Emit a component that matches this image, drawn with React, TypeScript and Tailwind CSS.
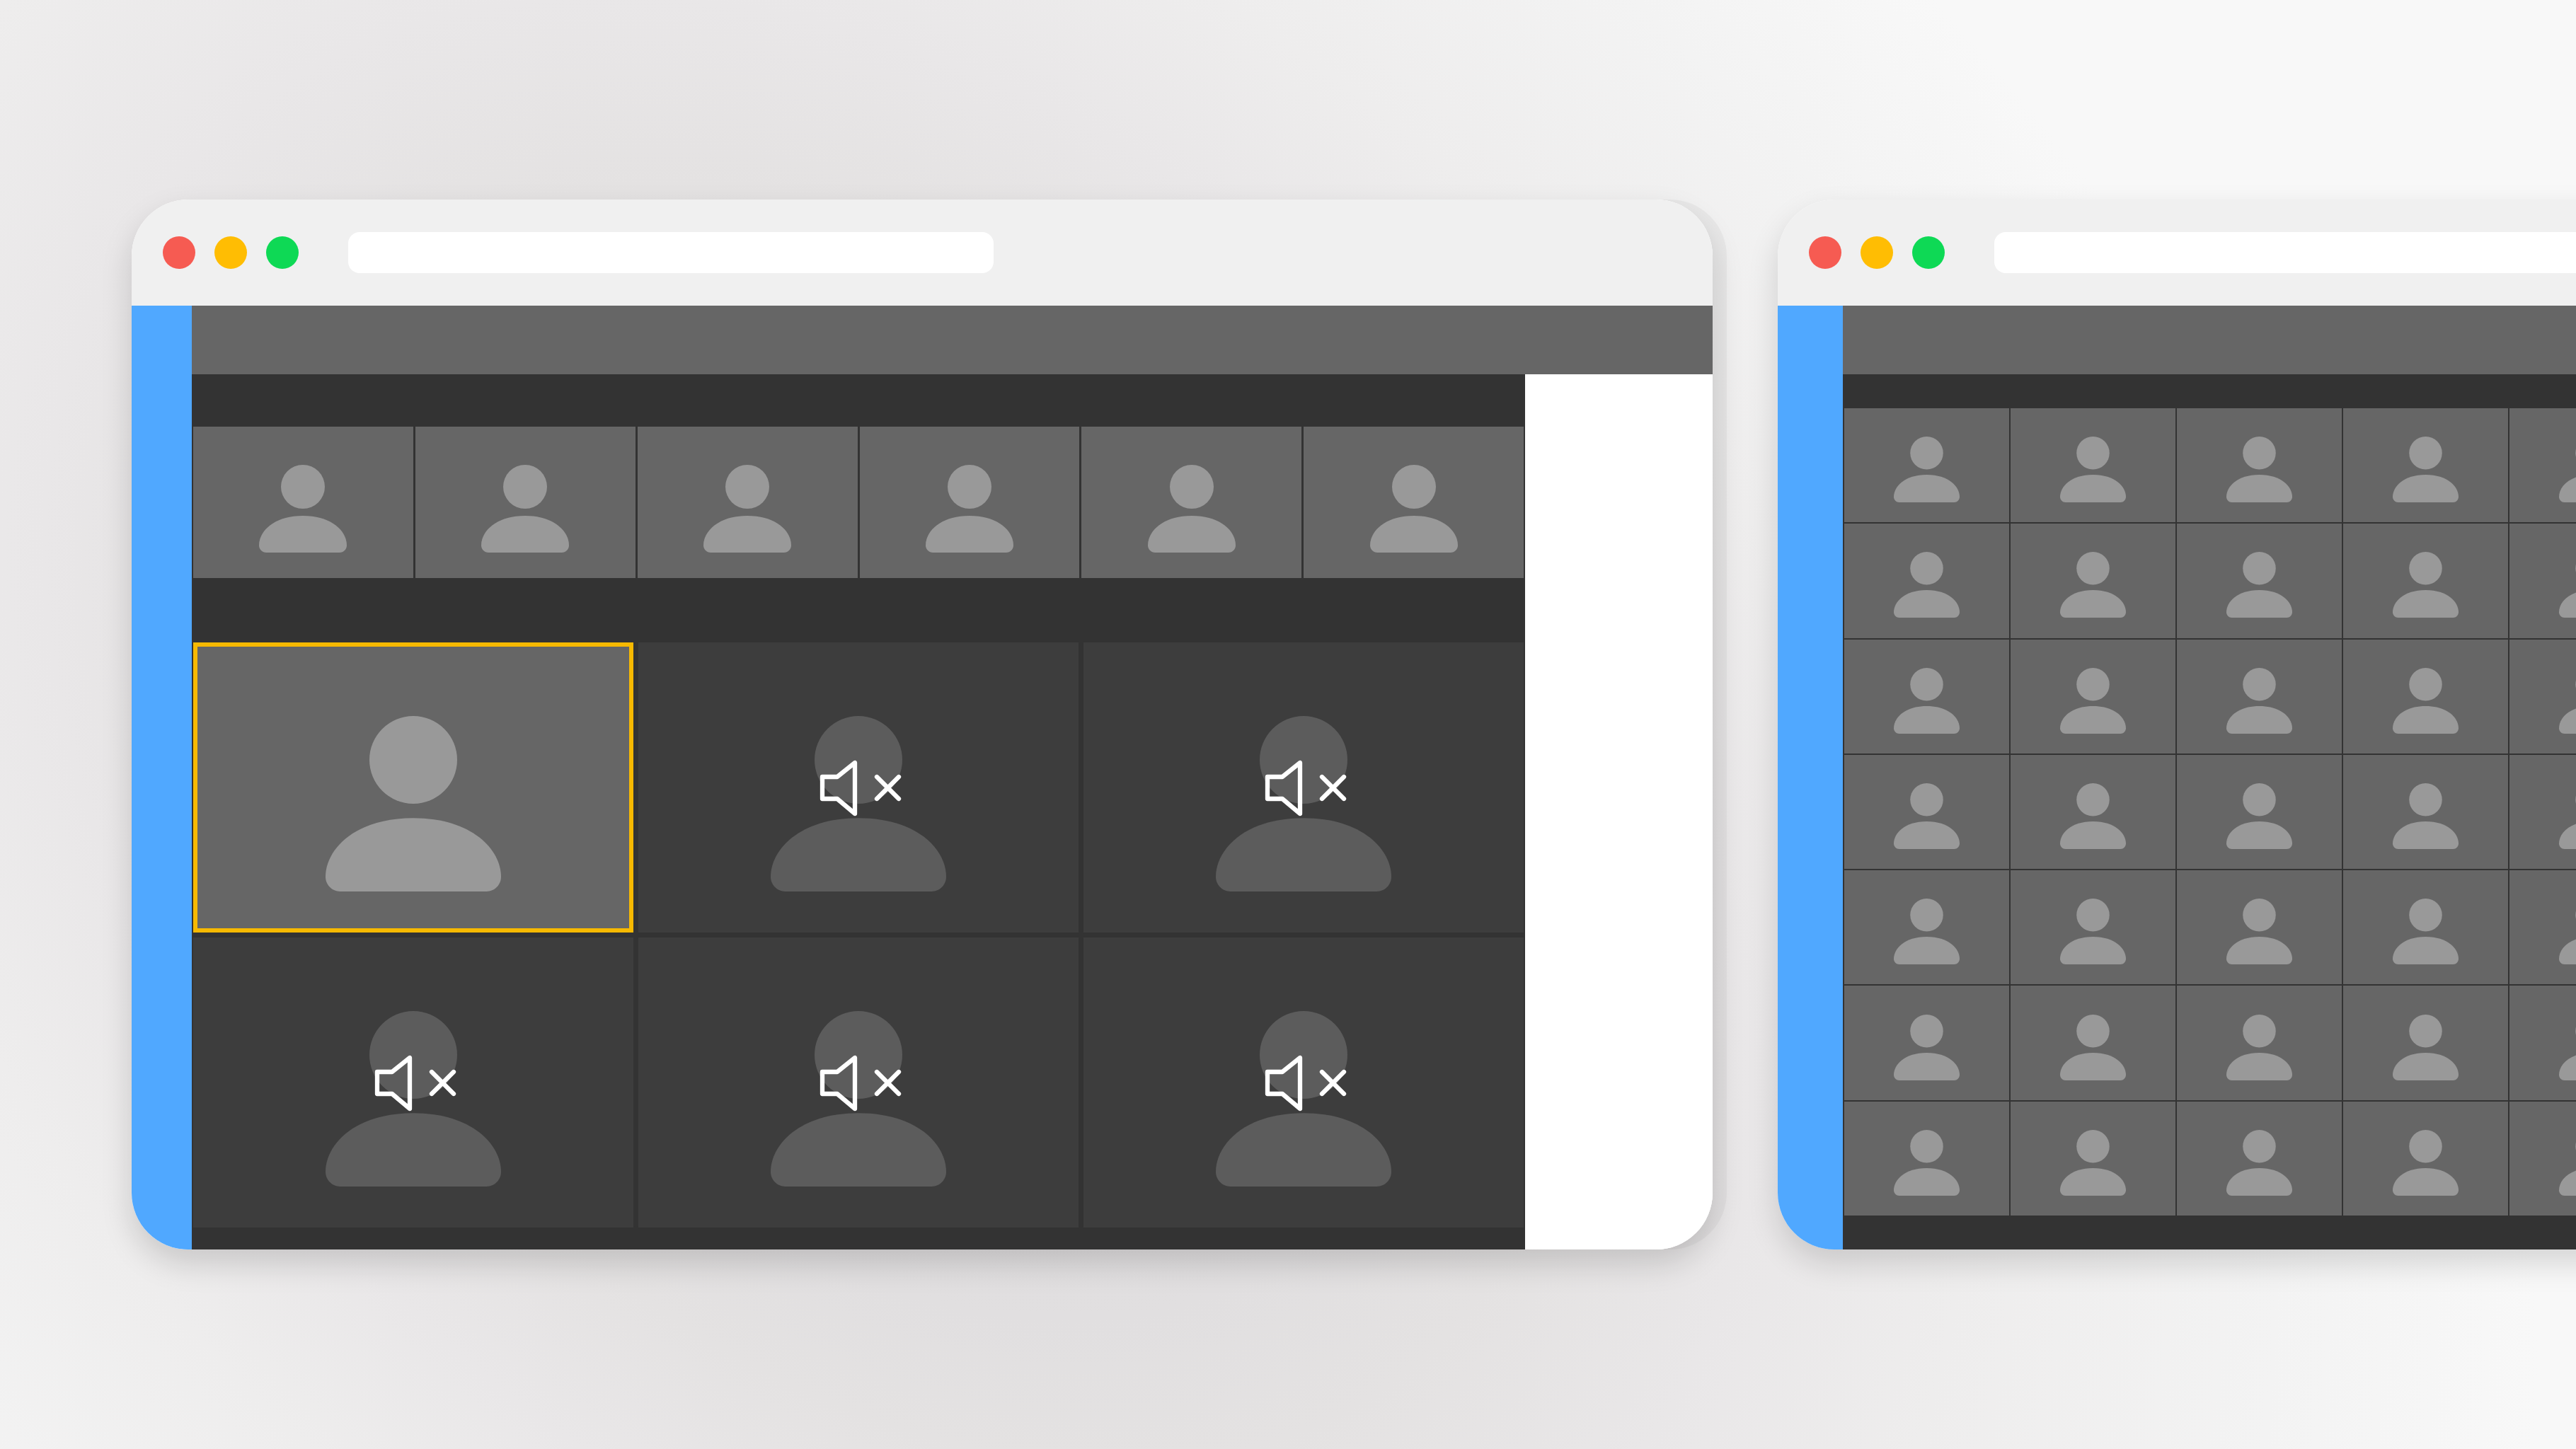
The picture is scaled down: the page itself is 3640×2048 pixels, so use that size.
function PersonIcon({ className }: { className: string }) {
  return (
    <svg viewBox="0 0 96 96" fill="currentColor" aria-hidden="true" className={className}>
      <circle cx="48" cy="24" r="24" />
      <path d="M0 88C0 73 16 55.8 48 55.8S96 73 96 88C96 92.4 92.4 96 88 96H8C3.6 96 0 92.4 0 88Z" />
    </svg>
  );
}

function MutedIcon() {
  return (
    <svg
      viewBox="0 0 122 82"
      fill="none"
      stroke="currentColor"
      strokeWidth="6.3"
      strokeLinecap="round"
      strokeLinejoin="round"
      role="img"
      aria-label="Muted"
      className="h-[82px] w-[122px] text-white"
    >
      <path d="M10 25H31L56 5V77L31 56H10ZM87 25L118 56M118 25L87 56" />
    </svg>
  );
}

function TitleBar() {
  return (
    <header className="flex h-[150px] items-center bg-[#f0f0f0] pl-11">
      <div className="flex gap-[27px]">
        <button aria-label="Close" className="size-[46px] rounded-full bg-[#f65b52]" />
        <button aria-label="Minimize" className="size-[46px] rounded-full bg-[#ffbd03]" />
        <button aria-label="Maximize" className="size-[46px] rounded-full bg-[#0ed955]" />
      </div>
      <input
        aria-label="Address"
        className="ml-[70px] h-[58px] w-[912px] rounded-2xl bg-white px-6 text-2xl outline-none"
      />
    </header>
  );
}

function SpeakerTile({ muted }: { muted: boolean }) {
  if (!muted) {
    return (
      <div className="flex h-[410px] items-center justify-center border-6 border-[#f7b900] bg-[#666] pt-[46px] text-[#999]">
        <PersonIcon className="size-[248px]" />
      </div>
    );
  }
  return (
    <div className="relative flex h-[410px] items-center justify-center bg-[#3d3d3d] pt-[46px] text-[#5c5c5c]">
      <PersonIcon className="size-[248px]" />
      <div className="absolute inset-0 flex items-center justify-center pt-0.5">
        <MutedIcon />
      </div>
    </div>
  );
}

function SpeakerWindow() {
  return (
    <section className="rounded-[80px] shadow-[20px_0_0_rgba(0,0,0,0.035),0_20px_44px_rgba(0,0,0,0.15)]">
      <div className="overflow-hidden rounded-[80px] bg-white">
        <TitleBar />
        <div className="flex">
          <nav aria-label="Sidebar" className="w-[85px] shrink-0 bg-[#50a8ff]" />
          <div className="min-w-0 flex-1">
            <div className="h-[97px] bg-[#666]" />
            <div className="flex">
              <main className="flex-1 bg-[#333] px-0.5 pt-[74px] pb-[31px]">
                <div className="mb-[91px] grid grid-cols-6 gap-[3px]">
                  {Array.from({ length: 6 }, (_, i) => (
                    <div key={i} className="flex h-[214px] items-center justify-center bg-[#666] pt-[17px] text-[#999]">
                      <PersonIcon className="size-[124px]" />
                    </div>
                  ))}
                </div>
                <div className="grid grid-cols-3 gap-[7px]">
                  {Array.from({ length: 6 }, (_, i) => (
                    <SpeakerTile key={i} muted={i > 0} />
                  ))}
                </div>
              </main>
              <aside className="w-[265px] shrink-0 bg-white" />
            </div>
          </div>
        </div>
      </div>
    </section>
  );
}

function GalleryWindow() {
  return (
    <section className="flex w-[calc(100%+1106px)] flex-col overflow-hidden rounded-[80px] bg-white shadow-[0_20px_44px_rgba(0,0,0,0.14)]">
      <TitleBar />
      <div className="flex flex-1">
        <nav aria-label="Sidebar" className="w-[92px] shrink-0 bg-[#50a8ff]" />
        <div className="flex min-w-0 flex-1 flex-col">
          <div className="h-[97px] bg-[#666]" />
          <div className="flex flex-1">
            <main className="flex flex-1 flex-col bg-[#333] px-0.5 pt-12 pb-12">
              <div className="grid flex-1 grid-cols-7 grid-rows-7 gap-0.5">
                {Array.from({ length: 49 }, (_, i) => (
                  <div key={i} className="flex items-center justify-center bg-[#666] pt-3 text-[#999]">
                    <PersonIcon className="size-[93px]" />
                  </div>
                ))}
              </div>
            </main>
            <aside className="w-[495px] shrink-0 bg-white" />
          </div>
        </div>
      </div>
    </section>
  );
}

export default function App() {
  return (
    <div className="relative min-h-screen overflow-hidden bg-[#f8f8f8] pt-[282px] pb-[282px] pl-[186px]">
      <div
        aria-hidden="true"
        className="absolute inset-x-[-25%] inset-y-0 skew-x-[19deg] bg-[radial-gradient(ellipse_40%_110%_at_39%_57%,#dcdadb_0%,#e1dfe0_31%,#e4e2e2_40%,#e9e7e8_52%,#eeeded_65%,#f3f3f3_84%,#f8f8f8_100%)]"
      />
      <div className="relative grid grid-cols-[minmax(0,2234fr)_minmax(0,1128fr)] gap-[92px]">
        <SpeakerWindow />
        <GalleryWindow />
      </div>
    </div>
  );
}
